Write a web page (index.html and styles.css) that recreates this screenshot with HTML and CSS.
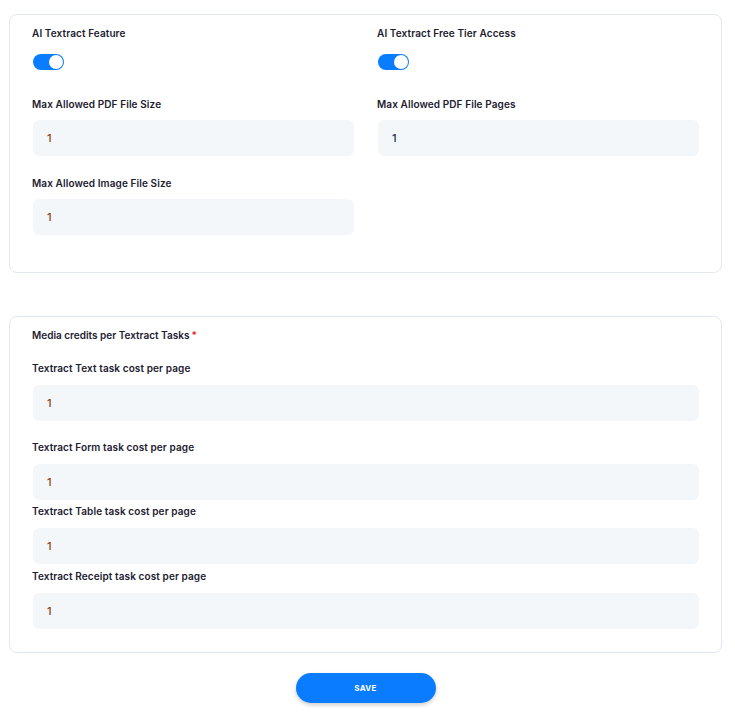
FILE: index.html
```html
<html lang="en">
<head>
    <title>Textract Settings</title>
    <link rel="stylesheet" href="styles.css">
</head>
<body>

<div class="page">
    <div class="card card-top">
        <div class="grid">
            <div class="field">
                <label>AI Textract Feature</label>
                <div class="switch-row"><span class="switch on"></span></div>
            </div>
            <div class="field">
                <label>AI Textract Free Tier Access</label>
                <div class="switch-row"><span class="switch on"></span></div>
            </div>
            <div class="field">
                <label>Max Allowed PDF File Size</label>
                <div class="input warm">1</div>
            </div>
            <div class="field">
                <label>Max Allowed PDF File Pages</label>
                <div class="input">1</div>
            </div>
            <div class="field">
                <label>Max Allowed Image File Size</label>
                <div class="input warm">1</div>
            </div>
        </div>
    </div>

    <div class="card card-bottom">
        <h4 class="section-title">Media credits per Textract Tasks<span class="req">*</span></h4>
        <div class="field f-text">
            <label>Textract Text task cost per page</label>
            <div class="input warm">1</div>
        </div>
        <div class="field f-form">
            <label>Textract Form task cost per page</label>
            <div class="input warm">1</div>
        </div>
        <div class="field f-table">
            <label>Textract Table task cost per page</label>
            <div class="input warm">1</div>
        </div>
        <div class="field f-receipt">
            <label>Textract Receipt task cost per page</label>
            <div class="input warm">1</div>
        </div>
    </div>

    <div class="actions">
        <button class="btn-save">SAVE</button>
    </div>
</div>

</body>
</html>
```

FILE: styles.css
```css
html {
    font-family: "Inter", "Open Sans", sans-serif;
    color: #1c2030;
}

body {
    margin: 0;
    background: #ffffff;
}

.page {
    width: 713px;
    padding: 14px 0 0 9px;
}

.card {
    border: 1px solid #e3e8ef;
    border-radius: 8px;
    padding: 11px 22px 0 23px;
}

.card-top {
    height: 259px;
    box-sizing: border-box;
}

.grid {
    display: grid;
    grid-template-columns: 1fr 1fr;
    column-gap: 24px;
}

.field label {
    display: block;
    font-size: 10px;
    font-weight: 600;
    line-height: 15px;
    height: 15px;
    margin-left: -1px;
    margin-bottom: 8px;
    letter-spacing: 0.1px;
}

.grid .field {
    margin-bottom: 20px;
}

.grid .field:nth-child(1),
.grid .field:nth-child(2) {
    margin-bottom: 12px;
}

.switch-row {
    height: 36px;
    box-sizing: border-box;
    padding-top: 5px;
}

.switch {
    position: relative;
    display: block;
    width: 31px;
    height: 16px;
    border-radius: 8px;
    background: #0a7cff;
}

.switch.on::after {
    content: "";
    position: absolute;
    right: 1px;
    top: 1px;
    width: 14px;
    height: 14px;
    border-radius: 50%;
    background: #ffffff;
}

.input {
    height: 36px;
    line-height: 36px;
    background: #f4f7fa;
    border-radius: 6px;
    padding-left: 14px;
    font-size: 11px;
    font-weight: 500;
    color: #1f2a5a;
}

.input.warm {
    color: #8a4510;
}

.card-bottom {
    margin-top: 43px;
    padding-top: 11px;
    height: 337px;
    box-sizing: border-box;
}

.card-bottom .field label {
    margin-bottom: 9px;
}

.section-title {
    margin: 0 0 18px -1px;
    font-size: 10px;
    font-weight: 600;
    line-height: 15px;
}

.req {
    color: #e8242c;
    margin-left: 2px;
}

.f-text {
    margin-bottom: 19px;
}

.f-form {
    margin-bottom: 4px;
}

.f-table {
    margin-bottom: 5px;
}

.actions {
    display: flex;
    justify-content: center;
    padding-top: 20px;
}

.btn-save {
    width: 140px;
    height: 30px;
    border: none;
    border-radius: 15px;
    background: #0a7cff;
    color: #ffffff;
    font-family: "Inter", sans-serif;
    font-size: 8px;
    font-weight: 700;
    letter-spacing: 0.3px;
    box-shadow: 0 2px 4px rgba(0, 0, 0, 0.2);
}
```
